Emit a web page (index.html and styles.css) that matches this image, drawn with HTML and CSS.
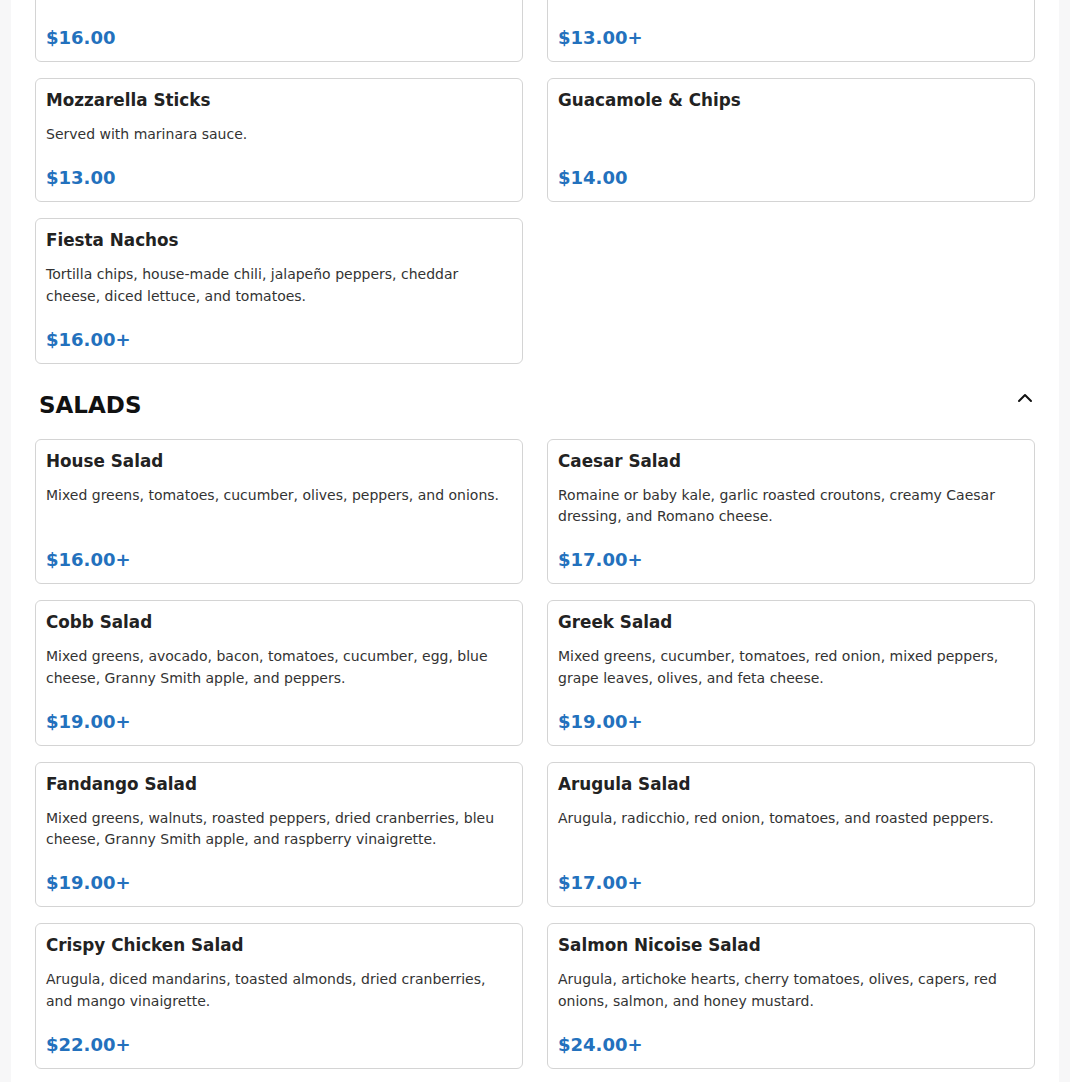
FILE: index.html
```html
<!DOCTYPE html>
<html lang="en">
<head>
<meta charset="utf-8">
<title>Menu</title>
<link rel="stylesheet" href="styles.css">
</head>
<body>
<main class="page">
  <section class="section section-first">
    <div class="grid">
      <article class="card card-cut"><div class="price">$16.00</div></article>
      <article class="card card-cut"><div class="price">$13.00+</div></article>
      <article class="card">
        <h3 class="item-name">Mozzarella Sticks</h3>
        <p class="item-desc">Served with marinara sauce.</p>
        <div class="price">$13.00</div>
      </article>
      <article class="card">
        <h3 class="item-name">Guacamole &amp; Chips</h3>
        <div class="price">$14.00</div>
      </article>
      <article class="card">
        <h3 class="item-name">Fiesta Nachos</h3>
        <p class="item-desc">Tortilla chips, house-made chili, jalapeño peppers, cheddar cheese, diced lettuce, and tomatoes.</p>
        <div class="price">$16.00+</div>
      </article>
    </div>
  </section>

  <section class="section">
    <div class="section-head">
      <h2 class="section-title">SALADS</h2>
      <button class="toggle" type="button" aria-label="Collapse">
        <svg width="16" height="16" viewBox="0 0 16 16" fill="none" stroke="#111" stroke-width="2" stroke-linecap="round" stroke-linejoin="round"><path d="M2 11 L8 5 L14 11"/></svg>
      </button>
    </div>
    <div class="grid">
      <article class="card">
        <h3 class="item-name">House Salad</h3>
        <p class="item-desc">Mixed greens, tomatoes, cucumber, olives, peppers, and onions.</p>
        <div class="price">$16.00+</div>
      </article>
      <article class="card">
        <h3 class="item-name">Caesar Salad</h3>
        <p class="item-desc">Romaine or baby kale, garlic roasted croutons, creamy Caesar dressing, and Romano cheese.</p>
        <div class="price">$17.00+</div>
      </article>
      <article class="card">
        <h3 class="item-name">Cobb Salad</h3>
        <p class="item-desc">Mixed greens, avocado, bacon, tomatoes, cucumber, egg, blue cheese, Granny Smith apple, and peppers.</p>
        <div class="price">$19.00+</div>
      </article>
      <article class="card">
        <h3 class="item-name">Greek Salad</h3>
        <p class="item-desc">Mixed greens, cucumber, tomatoes, red onion, mixed peppers, grape leaves, olives, and feta cheese.</p>
        <div class="price">$19.00+</div>
      </article>
      <article class="card">
        <h3 class="item-name">Fandango Salad</h3>
        <p class="item-desc">Mixed greens, walnuts, roasted peppers, dried cranberries, bleu cheese, Granny Smith apple, and raspberry vinaigrette.</p>
        <div class="price">$19.00+</div>
      </article>
      <article class="card">
        <h3 class="item-name">Arugula Salad</h3>
        <p class="item-desc">Arugula, radicchio, red onion, tomatoes, and roasted peppers.</p>
        <div class="price">$17.00+</div>
      </article>
      <article class="card">
        <h3 class="item-name">Crispy Chicken Salad</h3>
        <p class="item-desc">Arugula, diced mandarins, toasted almonds, dried cranberries, and mango vinaigrette.</p>
        <div class="price">$22.00+</div>
      </article>
      <article class="card">
        <h3 class="item-name">Salmon Nicoise Salad</h3>
        <p class="item-desc">Arugula, artichoke hearts, cherry tomatoes, olives, capers, red onions, salmon, and honey mustard.</p>
        <div class="price">$24.00+</div>
      </article>
    </div>
  </section>
</main>
</body>
</html>
```

FILE: styles.css
```css
* { box-sizing: border-box; }

html, body {
  margin: 0;
  padding: 0;
}

body {
  background: #f7f7f8;
  font-family: "DejaVu Sans", sans-serif;
  color: #222;
}

.page {
  max-width: 1048px;
  margin: 0 auto;
  background: #fff;
  padding: 0 24px 40px;
  min-height: 1200px;
}

.section-first .grid {
  margin-top: -62px;
}

.section-head {
  display: flex;
  justify-content: space-between;
  align-items: flex-start;
  margin: 26.5px 0 20.5px;
  padding: 0 2px 0 4px;
}

.section-title {
  margin: 2px 0 0;
  font-size: 23px;
  line-height: 26px;
  font-weight: bold;
  color: #111;
}

.toggle {
  background: none;
  border: 0;
  padding: 0;
  margin: 0;
  width: 16px;
  height: 16px;
  display: block;
  cursor: pointer;
}

.toggle svg { display: block; }

.grid {
  display: grid;
  grid-template-columns: 1fr 1fr;
  column-gap: 24px;
  row-gap: 16px;
}

.card {
  display: flex;
  flex-direction: column;
  border: 1px solid #d4d4d4;
  border-radius: 6px;
  padding: 11px 10px 13px;
  min-height: 124px;
  background: #fff;
}

.item-name {
  margin: 0 0 14px;
  font-size: 16.8px;
  line-height: 20px;
  font-weight: bold;
  color: #222;
}

.item-desc {
  margin: 0 0 21.5px;
  font-size: 14px;
  line-height: 21.5px;
  color: #333;
}

.price {
  margin-top: auto;
  font-size: 18px;
  line-height: 21px;
  font-weight: bold;
  color: #2371bd;
}
```
